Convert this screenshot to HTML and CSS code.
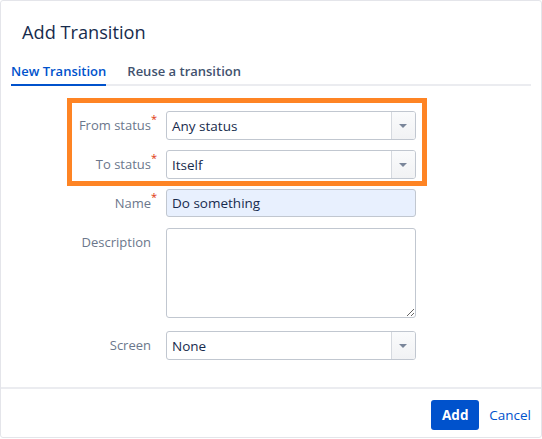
FILE: index.html
```html
<!DOCTYPE html>
<html>

<head>
    <title>Add Transition</title>
    <meta charset="UTF-8">
    <link rel="stylesheet" href="styles.css">
</head>

<body>
    <div class="dialog">
        <div class="dialog-header">
            <h2>Add Transition</h2>
        </div>

        <div class="tabs">
            <a class="tab active">New Transition</a>
            <a class="tab">Reuse a transition</a>
        </div>

        <form class="form">
            <div class="highlight"></div>

            <div class="field-group">
                <label class="required">From status</label>
                <div class="select">
                    <span class="select-value">Any status</span>
                    <span class="select-arrow"></span>
                </div>
            </div>
            <div class="field-group">
                <label class="required">To status</label>
                <div class="select">
                    <span class="select-value">Itself</span>
                    <span class="select-arrow"></span>
                </div>
            </div>
            <div class="field-group">
                <label class="required">Name</label>
                <input type="text" class="text autofilled" value="Do something">
            </div>
            <div class="field-group field-group-tall">
                <label>Description</label>
                <textarea class="textarea"></textarea>
            </div>
            <div class="field-group">
                <label>Screen</label>
                <div class="select">
                    <span class="select-value">None</span>
                    <span class="select-arrow"></span>
                </div>
            </div>
        </form>

        <div class="dialog-footer">
            <button class="button-primary">Add</button>
            <a class="cancel">Cancel</a>
        </div>
    </div>
</body>

</html>
```

FILE: styles.css
```css
* {
    margin: 0;
    padding: 0;
    box-sizing: border-box;
}

body {
    font-family: "Open Sans", "Noto Sans", Arial, sans-serif;
    font-size: 14px;
    color: #172b4d;
    background: #fff;
}

.dialog {
    width: 542px;
    height: 438px;
    border: 1px solid #e4e5ea;
    border-radius: 3px;
    display: flex;
    flex-direction: column;
}

.dialog-header {
    padding: 17px 21px 0;
}

.dialog-header h2 {
    font-size: 18.2px;
    font-weight: 400;
    line-height: 28px;
    color: #172b4d;
}

.tabs {
    display: flex;
    gap: 21px;
    margin: 15px 10px 0 10px;
    border-bottom: 2px solid #ebecf0;
}

.tab {
    font-size: 13px;
    font-weight: 600;
    line-height: 21px;
    color: #42526e;
    padding-bottom: 2px;
    margin-bottom: -2px;
    border-bottom: 2px solid transparent;
}

.tab.active {
    color: #0052cc;
    border-bottom-color: #0052cc;
}

/* form */
.form {
    position: relative;
    flex: 1;
    padding-top: 25px;
}

/* orange marker round the status fields */
.highlight {
    position: absolute;
    left: 66px;
    top: 12px;
    width: 360px;
    height: 88px;
    border: 5px solid #fe8424;
    pointer-events: none;
}

.field-group {
    display: flex;
    align-items: flex-start;
    margin-bottom: 10px;
}

.field-group-tall {
    margin-bottom: 13px;
}

label {
    width: 150px;
    flex-shrink: 0;
    margin-right: 15px;
    text-align: right;
    font-size: 13px;
    line-height: 29px;
    color: #6b778c;
    position: relative;
}

label.required::after {
    content: "*";
    position: absolute;
    right: -6px;
    top: -7px;
    font-size: 11px;
    color: #de350b;
}

.select,
.text,
.textarea {
    width: 250px;
    height: 29px;
    border: 1px solid #c1c7d0;
    border-radius: 3px;
    background: #fff;
    font-family: inherit;
    font-size: 13.5px;
    color: #172b4d;
}

.select {
    display: flex;
    align-items: center;
}

.select-value {
    flex: 1;
    padding-left: 5px;
}

.select-arrow {
    width: 24px;
    height: 100%;
    border-left: 1px solid #d5d9df;
    background: linear-gradient(#fafbfc, #f1f2f4);
    border-radius: 0 2px 2px 0;
    position: relative;
}

.select-arrow::after {
    content: "";
    position: absolute;
    left: 7px;
    top: 12px;
    border-left: 4px solid transparent;
    border-right: 4px solid transparent;
    border-top: 4px solid #7a869a;
}

.text {
    padding: 0 5px;
    height: 28px;
    outline: none;
}

.text.autofilled {
    background: #e8f0fe;
}

.textarea {
    height: 90px;
    resize: both;
    outline: none;
}

/* footer */
.dialog-footer {
    border-top: 2px solid #ebecf0;
    height: 50px;
    display: flex;
    align-items: center;
    justify-content: flex-end;
    gap: 10px;
    padding: 4px 10px 0 0;
}

.button-primary {
    width: 48px;
    height: 30px;
    background: #0052cc;
    color: #fff;
    border: none;
    border-radius: 3px;
    font-family: inherit;
    font-size: 13.5px;
    font-weight: 700;
}

.cancel {
    color: #0052cc;
    font-size: 13.5px;
}
```
